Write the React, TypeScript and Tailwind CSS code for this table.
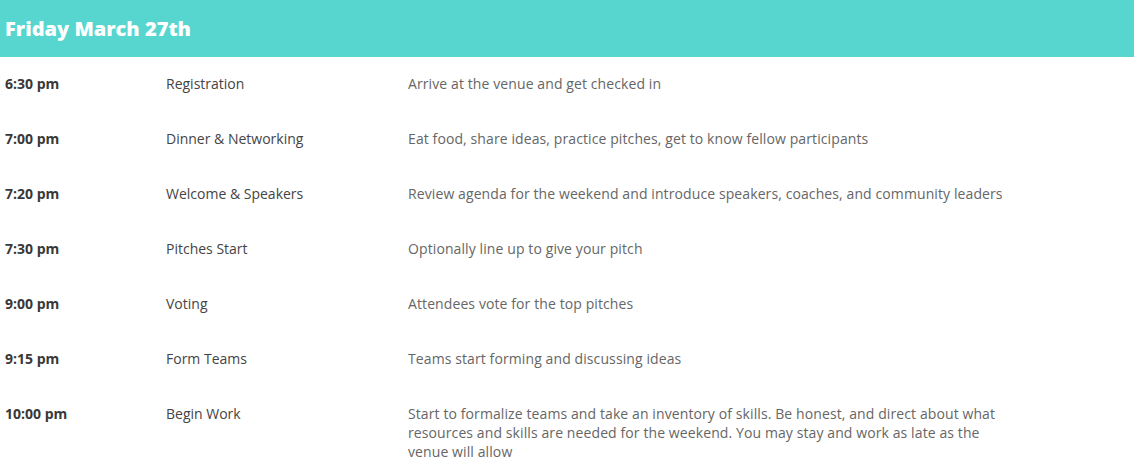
import React from "react";

type ScheduleItem = {
  time: string;
  title: string;
  description: string;
};

const items: ScheduleItem[] = [
  {
    time: "6:30 pm",
    title: "Registration",
    description: "Arrive at the venue and get checked in",
  },
  {
    time: "7:00 pm",
    title: "Dinner & Networking",
    description:
      "Eat food, share ideas, practice pitches, get to know fellow participants",
  },
  {
    time: "7:20 pm",
    title: "Welcome & Speakers",
    description:
      "Review agenda for the weekend and introduce speakers, coaches, and community leaders",
  },
  {
    time: "7:30 pm",
    title: "Pitches Start",
    description: "Optionally line up to give your pitch",
  },
  {
    time: "9:00 pm",
    title: "Voting",
    description: "Attendees vote for the top pitches",
  },
  {
    time: "9:15 pm",
    title: "Form Teams",
    description: "Teams start forming and discussing ideas",
  },
  {
    time: "10:00 pm",
    title: "Begin Work",
    description:
      "Start to formalize teams and take an inventory of skills. Be honest, and direct about what resources and skills are needed for the weekend. You may stay and work as late as the venue will allow",
  },
];

const App: React.FC = () => {
  return (
    <div className="min-h-screen bg-white font-['Open_Sans',sans-serif]">
      <header className="h-[57px] bg-[#56d6cf] flex items-center px-[5px]">
        <h1 className="text-[20px] font-extrabold text-white">
          Friday March 27th
        </h1>
      </header>

      <div>
        {items.map((item) => (
          <div
            key={item.time}
            className="flex items-start pt-[17px] pb-[19px] px-[5px] text-[14px] leading-[19px]"
          >
            <div className="w-[161px] shrink-0 font-bold text-[#383838]">
              {item.time}
            </div>
            <div className="w-[242px] shrink-0 text-[#444444]">
              {item.title}
            </div>
            <div className="w-[600px] text-[#666666] tracking-[0.1px]">
              {item.description}
            </div>
          </div>
        ))}
      </div>
    </div>
  );
};

export default App;
